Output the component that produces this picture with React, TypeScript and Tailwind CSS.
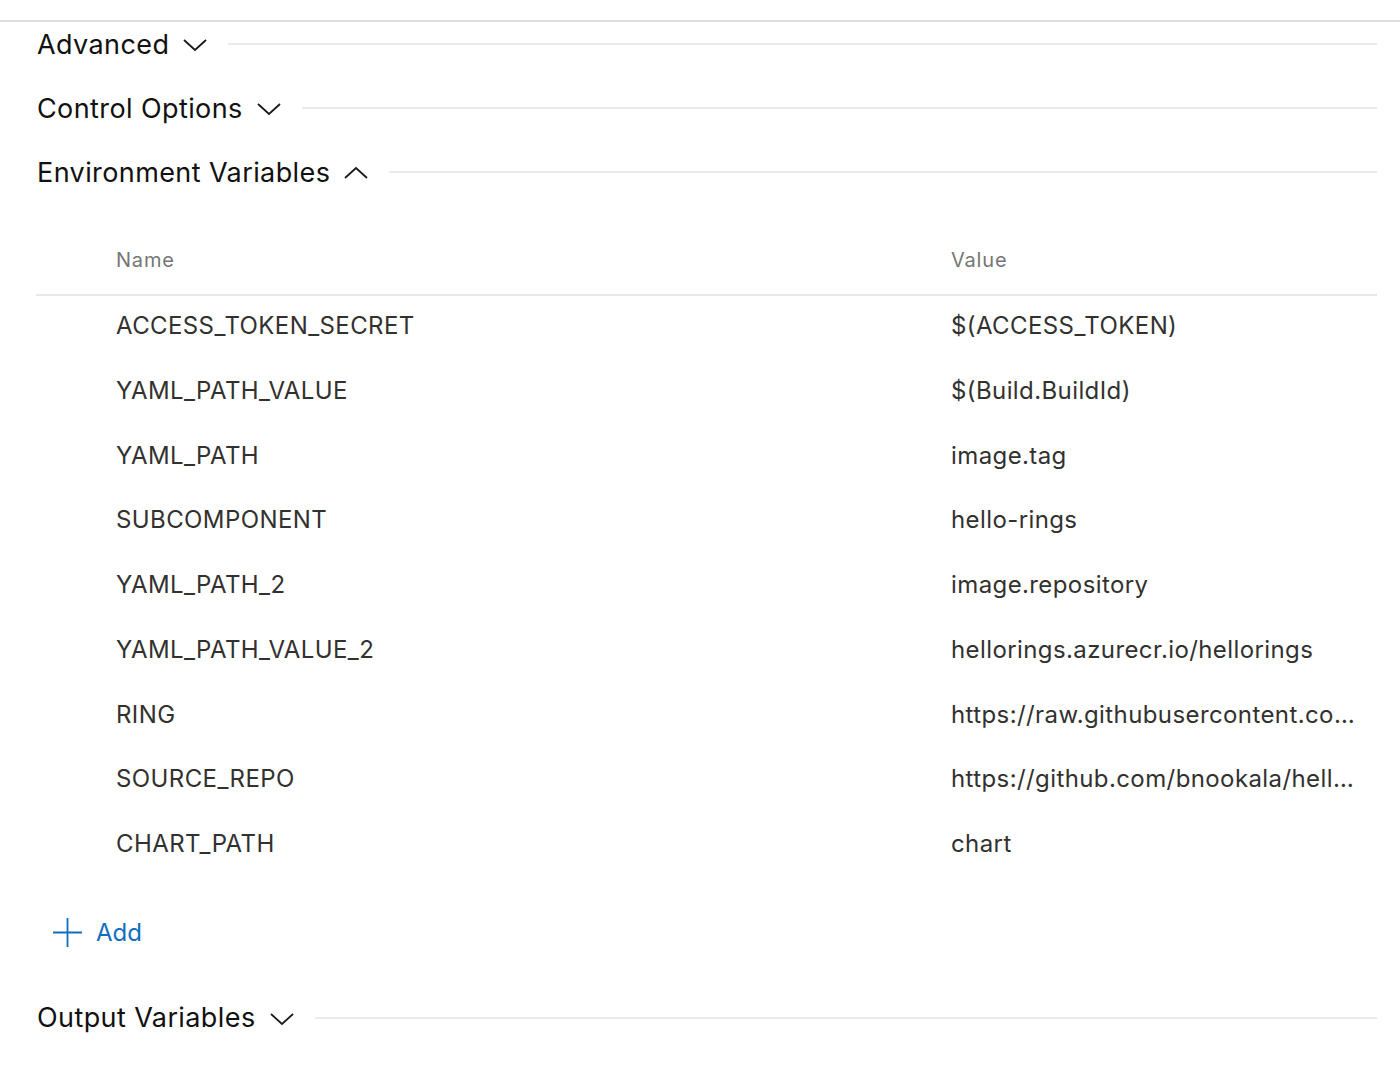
import React from "react";

const font = { fontFamily: "Inter, 'Noto Sans', 'Liberation Sans', sans-serif" };

function Chevron({ up }: { up?: boolean }) {
  return (
    <svg width="26" height="16" viewBox="0 0 26 16" fill="none" className="shrink-0">
      {up ? (
        <path d="M2 13 L13 3 L24 13" stroke="#1a1a1a" strokeWidth="1.8" />
      ) : (
        <path d="M2 3 L13 13 L24 3" stroke="#1a1a1a" strokeWidth="1.8" />
      )}
    </svg>
  );
}

function SectionHeader({ title, up, className }: { title: string; up?: boolean; className?: string }) {
  return (
    <div className={"flex h-[46px] items-center pr-[23px] " + (className ?? "")}>
      <span className="text-[27px] tracking-[0.4px] text-[#111] leading-none">{title}</span>
      <span className="ml-[13px] mt-[2px]"><Chevron up={up} /></span>
      <div className="ml-[20px] h-[2px] flex-1 bg-[#ebebeb]" />
    </div>
  );
}

const rows: [string, string][] = [
  ["ACCESS_TOKEN_SECRET", "$(ACCESS_TOKEN)"],
  ["YAML_PATH_VALUE", "$(Build.BuildId)"],
  ["YAML_PATH", "image.tag"],
  ["SUBCOMPONENT", "hello-rings"],
  ["YAML_PATH_2", "image.repository"],
  ["YAML_PATH_VALUE_2", "hellorings.azurecr.io/hellorings"],
  ["RING", "https://raw.githubusercontent.com/bnookala/hello-rings/master/ring.yaml"],
  ["SOURCE_REPO", "https://github.com/bnookala/hello-rings"],
  ["CHART_PATH", "chart"],
];

export default function App() {
  return (
    <div className="w-[1400px] h-[1080px] bg-white overflow-hidden" style={font}>
      <div className="h-[20px]" />
      <div className="h-[2px] bg-[#dedede]" />
      <div className="pl-[37px]">
        <SectionHeader title="Advanced" className="-mt-[1px]" />
        <SectionHeader title="Control Options" className="mt-[18px]" />
        <SectionHeader title="Environment Variables" up className="mt-[18px]" />
      </div>
      <div className="pl-[36px] pr-[23px]">
        <div className="flex h-[101px] items-end pb-[24px] border-b-2 border-[#e8e8e8] text-[20px] tracking-[0.8px] leading-[20px] text-[#767676]">
          <div className="pl-[80px] w-[915px]">Name</div>
          <div>Value</div>
        </div>
        {rows.map(([n, v]) => (
          <div key={n} className="flex h-[64.75px] pt-[15px] text-[24px] tracking-[0.4px] leading-[30px] text-[#323130]">
            <div className="pl-[80px] w-[915px] shrink-0">{n}</div>
            <div className="w-[406px] overflow-hidden text-ellipsis whitespace-nowrap">{v}</div>
          </div>
        ))}
        <div className="mt-[38px] flex items-center h-[32px] pl-[16px] text-[#106ebe]">
          <svg width="31" height="31" viewBox="0 0 31 31" className="shrink-0">
            <path d="M15.5 1 V30 M1 15.5 H30" stroke="#106ebe" strokeWidth="1.8" />
          </svg>
          <span className="ml-[13px] text-[24px] leading-none">Add</span>
        </div>
      </div>
      <div className="pl-[37px] mt-[46px]">
        <SectionHeader title="Output Variables" />
      </div>
    </div>
  );
}
